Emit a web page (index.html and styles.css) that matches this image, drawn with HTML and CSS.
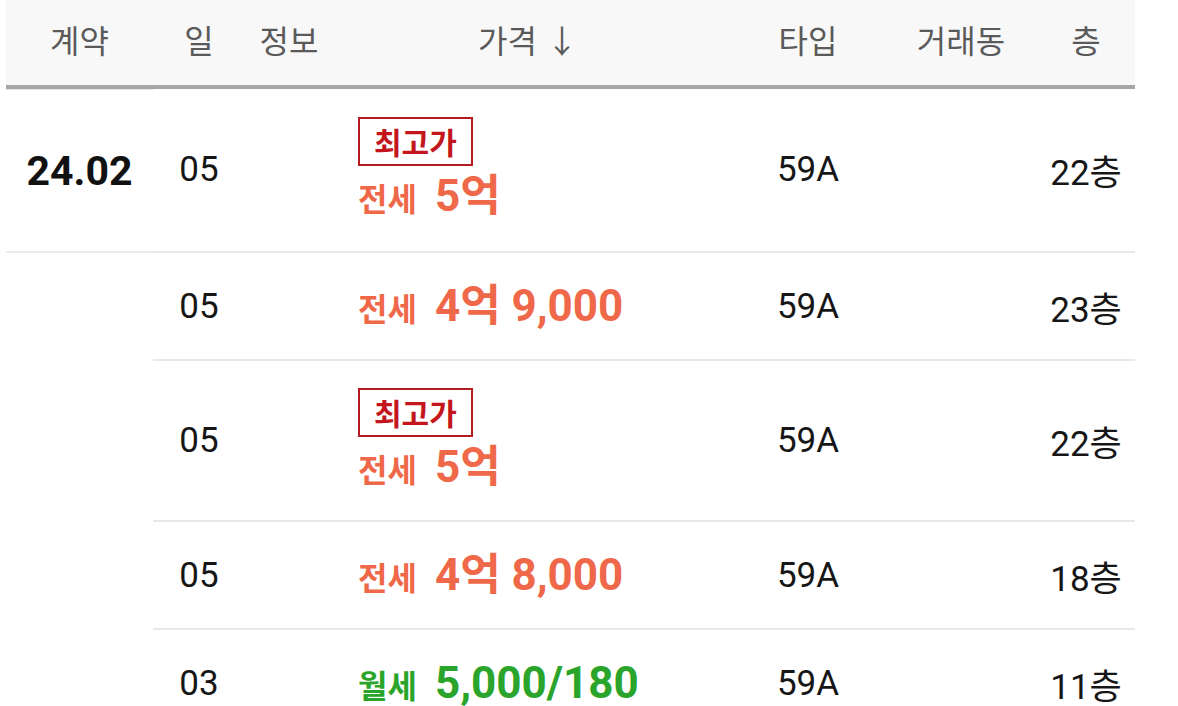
FILE: index.html
```html
<!DOCTYPE html>
<html lang="ko">
<head>
<meta charset="utf-8">
<link rel="stylesheet" href="styles.css">
</head>
<body>
<div class="table">
  <div class="head">
    <div class="h">계약</div>
    <div class="h">일</div>
    <div class="h">정보</div>
    <div class="h">가격 ↓</div>
    <div class="h">타입</div>
    <div class="h">거래동</div>
    <div class="h h-floor">층</div>
  </div>

  <div class="row first">
    <div class="contract">24.02</div>
    <div class="rest">
      <div class="day">05</div>
      <div class="info"></div>
      <div class="price">
        <span class="badge">최고가</span>
        <div class="deal jeonse"><span class="kind">전세</span><span class="amt">5억</span></div>
      </div>
      <div class="type">59A</div>
      <div class="dong"></div>
      <div class="floor">22층</div>
    </div>
  </div>

  <div class="row">
    <div class="contract"></div>
    <div class="rest">
      <div class="day">05</div>
      <div class="info"></div>
      <div class="price">
        <div class="deal jeonse"><span class="kind">전세</span><span class="amt">4억 9,000</span></div>
      </div>
      <div class="type">59A</div>
      <div class="dong"></div>
      <div class="floor">23층</div>
    </div>
  </div>

  <div class="row">
    <div class="contract"></div>
    <div class="rest">
      <div class="day">05</div>
      <div class="info"></div>
      <div class="price">
        <span class="badge">최고가</span>
        <div class="deal jeonse"><span class="kind">전세</span><span class="amt">5억</span></div>
      </div>
      <div class="type">59A</div>
      <div class="dong"></div>
      <div class="floor">22층</div>
    </div>
  </div>

  <div class="row">
    <div class="contract"></div>
    <div class="rest">
      <div class="day">05</div>
      <div class="info"></div>
      <div class="price">
        <div class="deal jeonse"><span class="kind">전세</span><span class="amt">4억 8,000</span></div>
      </div>
      <div class="type">59A</div>
      <div class="dong"></div>
      <div class="floor">18층</div>
    </div>
  </div>

  <div class="row">
    <div class="contract"></div>
    <div class="rest">
      <div class="day">03</div>
      <div class="info"></div>
      <div class="price">
        <div class="deal wolse"><span class="kind">월세</span><span class="amt">5,000/180</span></div>
      </div>
      <div class="type">59A</div>
      <div class="dong"></div>
      <div class="floor">11층</div>
    </div>
  </div>
</div>
</body>
</html>
```

FILE: styles.css
```css
* { box-sizing: border-box; }
html, body {
  margin: 0;
  padding: 0;
  background: #fff;
  overflow: hidden;
}
body {
  font-family: "Roboto", "Noto Sans CJK KR", sans-serif;
  color: #161616;
}
.table {
  margin-left: 6px;
  width: 1129px;
}
.head {
  display: grid;
  grid-template-columns: 147px 92px 88px 390px 170px 136px 106px;
  height: 89px;
  background: #f8f8f8;
  border-bottom: 4px solid #a7a7a7;
  align-items: center;
}
.h {
  text-align: center;
  font-family: "Noto Sans CJK KR", sans-serif;
  font-size: 32px;
  color: #5a5a5a;
  padding-bottom: 8px;
}
.h-floor { padding-left: 8px; }

.row {
  display: flex;
}
.contract {
  width: 147px;
  flex: none;
  display: flex;
  align-items: center;
  justify-content: center;
  font-size: 41px;
  font-weight: 700;
  color: #111;
}
.row.first .contract {
  border-top: 1px solid #e4e4e4;
  border-bottom: 2px solid #ececec;
}
.rest {
  flex: 1;
  display: grid;
  grid-template-columns: 92px 88px 390px 170px 136px 106px;
  align-items: center;
  border-bottom: 2px solid #e8e8e8;
  padding: 27px 0;
}
.row.first .rest { padding-top: 28px; padding-bottom: 29px; }
.day, .type, .floor {
  text-align: center;
  font-size: 35px;
  color: #161616;
}
.floor { padding-left: 8px; }
.price {
  padding-left: 25px;
  display: flex;
  flex-direction: column;
  align-items: flex-start;
  gap: 4px;
}
.badge {
  display: inline-block;
  border: 2px solid #b51a20;
  color: #c3161d;
  font-family: "Noto Sans CJK KR", sans-serif;
  font-weight: 700;
  font-size: 30px;
  line-height: 37px;
  padding: 4px 14px;
}
.deal {
  display: flex;
  align-items: baseline;
  height: 52px;
  line-height: 52px;
  font-weight: 700;
}
.kind {
  font-size: 32px;
  margin-right: 18px;
}
.amt {
  font-size: 44px;
}
.jeonse { color: #ef6849; }
.wolse { color: #2aa42a; }
```
